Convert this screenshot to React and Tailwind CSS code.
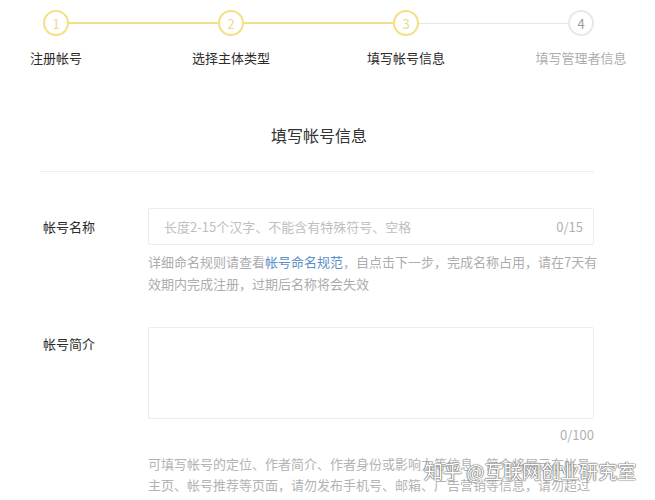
import React from "react";

const steps = [
  { n: 1, label: "注册帐号", done: true },
  { n: 2, label: "选择主体类型", done: true },
  { n: 3, label: "填写帐号信息", done: true },
  { n: 4, label: "填写管理者信息", done: false },
];

function Circle({ step }) {
  return (
    <div
      className={`w-[26px] h-[26px] shrink-0 rounded-full border-2 flex items-center justify-center text-[13px] leading-none ${
        step.done
          ? "border-[#f3df86] text-[#ecd98e]"
          : "border-[#e8e8e8] text-[#9a9a9a]"
      }`}
    >
      {step.n}
    </div>
  );
}

export default function App() {
  return (
    <div
      className="relative w-[655px] h-[500px] overflow-hidden bg-white text-[#333]"
      style={{ fontFamily: '"Noto Sans CJK SC", "Noto Sans", sans-serif' }}
    >
      {/* -------Stepper-------> */}
      <div className="flex items-center pl-[43px] pt-[10px]">
        <Circle step={steps[0]} />
        <div className="w-[149px] h-[2px] bg-[#f3df86]" />
        <Circle step={steps[1]} />
        <div className="w-[149px] h-[2px] bg-[#f3df86]" />
        <Circle step={steps[2]} />
        <div className="w-[149px] h-px bg-[#e6e6e6]" />
        <Circle step={steps[3]} />
      </div>
      <div className="flex gap-[75px] pl-[6px] mt-[13px]">
        {steps.map((s) => (
          <div
            key={s.n}
            className={`w-[100px] text-center text-[13px] leading-[18px] whitespace-nowrap ${
              s.n === 4 ? "text-[#adadad]" : "text-[#2b2b2b]"
            }`}
          >
            {s.label}
          </div>
        ))}
      </div>

      {/* -------Title-------> */}
      <h1 className="mt-[56px] text-center text-[16px] leading-6 w-[638px] text-[#333]">
        填写帐号信息
      </h1>
      <div className="mt-[24px] ml-[40px] w-[554px] h-px bg-[#eeeeee]" />

      {/* -------Account name-------> */}
      <div className="flex items-center pl-[43px] mt-[36px]">
        <span className="w-[105px] text-[13px] text-[#2b2b2b]">帐号名称</span>
        <div className="w-[446px] h-[37px] border border-[#ececec] rounded-[2px] flex items-center justify-between pl-[15px] pr-[10px]">
          <span className="text-[13px] text-[#c0c0c0]">
            长度2-15个汉字、不能含有特殊符号、空格
          </span>
          <span className="text-[13px] text-[#b0b0b0]">0/15</span>
        </div>
      </div>
      <p className="ml-[148px] mt-[6px] w-[450px] text-[13px] leading-[22px] text-[#adadad] whitespace-nowrap">
        详细命名规则请查看<span className="text-[#5b8fc7]">帐号命名规范</span>，自点击下一步，完成名称占用，请在7天有
        <br />
        效期内完成注册，过期后名称将会失效
      </p>

      {/* -------Account intro-------> */}
      <div className="flex items-start pl-[43px] mt-[32px]">
        <span className="w-[105px] pt-[7px] text-[13px] leading-5 text-[#2b2b2b]">
          帐号简介
        </span>
        <div className="w-[446px] h-[92px] border border-[#ececec] rounded-[2px]" />
      </div>
      <div className="ml-[148px] w-[446px] mt-[6px] text-right text-[13px] leading-5 text-[#b0b0b0]">
        0/100
      </div>
      <p className="ml-[148px] mt-[8px] w-[450px] text-[13px] leading-[21px] text-[#b3b3b3] whitespace-nowrap">
        可填写帐号的定位、作者简介、作者身份或影响力等信息，简介将展示在帐号
        <br />
        主页、帐号推荐等页面，请勿发布手机号、邮箱、广告营销等信息，请勿超过
        <br />
        100字
      </p>

      {/* -------Watermark-------> */}
      <div className="absolute left-[424px] top-[460px] text-[19px] leading-[22px] whitespace-nowrap text-white [text-shadow:0_0_1px_#555,0_0_1px_#555,0_0_2px_#888]">
        知乎 @互联网创业研究室
      </div>
    </div>
  );
}
